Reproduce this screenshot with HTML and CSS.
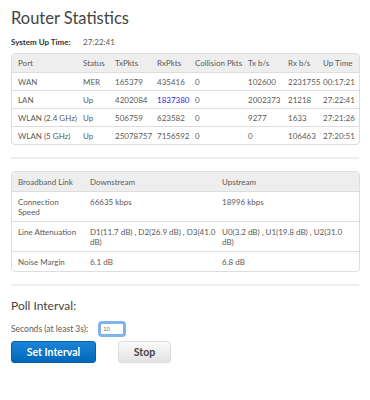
FILE: index.html
```html
<!DOCTYPE html>
<html lang="en">
<head>
    <meta charset="UTF-8">
    <meta name="viewport" content="width=device-width, initial-scale=1.0">
    <title>Router Statistics</title>
    <link rel="stylesheet" href="styles.css">
</head>
<body>
    <div class="page">
        <h1 class="title">Router Statistics</h1>
        <div class="uptime">
            <span class="label">System Up Time:</span>
            <span class="value">27:22:41</span>
        </div>

        <table class="grid ports">
            <colgroup>
                <col style="width:65px"><col style="width:32px"><col style="width:42px"><col style="width:38px">
                <col style="width:53px"><col style="width:40px"><col style="width:35px"><col style="width:42px">
            </colgroup>
            <tr class="head">
                <th>Port</th><th>Status</th><th>TxPkts</th><th>RxPkts</th>
                <th>Collision Pkts</th><th>Tx b/s</th><th>Rx b/s</th><th>Up Time</th>
            </tr>
            <tr>
                <td>WAN</td><td>MER</td><td>165379</td><td>435416</td>
                <td>0</td><td>102600</td><td>2231755</td><td>00:17:21</td>
            </tr>
            <tr>
                <td>LAN</td><td>Up</td><td>4202084</td><td class="hot">1837380</td>
                <td>0</td><td>2002373</td><td>21218</td><td>27:22:41</td>
            </tr>
            <tr>
                <td>WLAN (2.4 GHz)</td><td>Up</td><td>506759</td><td>623582</td>
                <td>0</td><td>9277</td><td>1633</td><td>27:21:26</td>
            </tr>
            <tr>
                <td>WLAN (5 GHz)</td><td>Up</td><td>25078757</td><td>7156592</td>
                <td>0</td><td>0</td><td>106463</td><td>27:20:51</td>
            </tr>
        </table>

        <hr class="rule">

        <table class="grid line">
            <colgroup>
                <col style="width:72px"><col style="width:132px"><col style="width:143px">
            </colgroup>
            <tr class="head">
                <th>Broadband Link</th><th>Downstream</th><th>Upstream</th>
            </tr>
            <tr>
                <td>Connection Speed</td><td>66635 kbps</td><td>18996 kbps</td>
            </tr>
            <tr>
                <td>Line Attenuation</td>
                <td>D1(11.7 dB) , D2(26.9 dB) , D3(41.0 dB)</td>
                <td>U0(3.2 dB) , U1(19.8 dB) , U2(31.0 dB)</td>
            </tr>
            <tr>
                <td>Noise Margin</td><td>6.1 dB</td><td>6.8 dB</td>
            </tr>
        </table>

        <hr class="rule">

        <h2 class="poll">Poll Interval:</h2>
        <div class="seconds">
            <label for="secs">Seconds (at least 3s):</label>
            <input id="secs" type="text" placeholder="10">
        </div>
        <div class="buttons">
            <button class="btn primary">Set Interval</button>
            <button class="btn plain">Stop</button>
        </div>
    </div>
</body>
</html>
```

FILE: styles.css
```css
body {
    margin: 0;
    padding: 0;
    font-family: Lato, "Open Sans", sans-serif;
    color: #5a5a5a;
    background: #fff;
}
.page {
    padding: 8px 11px 0 11px;
}
.title {
    font-size: 16.5px;
    font-weight: normal;
    color: #444;
    margin: 0 0 9px 0;
    line-height: 20px;
}
.uptime {
    font-size: 8px;
    display: flex;
    margin-bottom: 6px;
    line-height: 10px;
}
.uptime .label {
    font-weight: bold;
    color: #333;
    width: 72px;
}
.grid {
    border-collapse: separate;
    border-spacing: 0;
    table-layout: fixed;
    width: 347px;
    border: 1px solid #ddd;
    border-radius: 4px;
    font-size: 8px;
    color: #5a5a5a;
}
.grid th, .grid td {
    text-align: left;
    font-weight: normal;
    padding: 0 0 0 6px;
    white-space: nowrap;
    height: 17px;
    border-bottom: 1px solid #ddd;
    line-height: 10px;
}
.grid tr:last-child td {
    border-bottom: none;
}
.grid .head th {
    background: #eee;
    height: 18px;
}
.grid .head th:first-child {
    border-top-left-radius: 4px;
}
.grid .head th:last-child {
    border-top-right-radius: 4px;
}
.grid td.hot {
    color: #2a2ad8;
}
.line td {
    white-space: normal;
    vertical-align: top;
    padding-top: 5px;
    padding-bottom: 4px;
    height: auto;
}
.line td:first-child {
    padding-right: 5px;
}
.line td:last-child {
    padding-right: 12px;
}
.line .head th {
    height: 19px;
}
.rule {
    border: none;
    height: 2px;
    background: #eee;
    margin: 12px 0 12px 0;
}
.poll {
    font-size: 12px;
    font-weight: normal;
    color: #444;
    margin: 11px 0 7px 0;
    line-height: 16px;
}
.seconds {
    font-size: 8.5px;
    display: flex;
    align-items: center;
    gap: 10px;
}
.seconds input {
    width: 20px;
    height: 10px;
    border: 3px solid #7fb3ec;
    border-radius: 4px;
    font-size: 6px;
    padding: 0 0 0 2px;
    outline: none;
    color: #999;
}
.buttons {
    display: flex;
    gap: 22px;
    margin-top: 4px;
}
.btn {
    height: 22px;
    border-radius: 3px;
    font-family: Lato, sans-serif;
    font-weight: bold;
    font-size: 10.5px;
    cursor: pointer;
}
.primary {
    width: 85px;
    color: #fff;
    border: 1px solid #0a5fa8;
    background: linear-gradient(#1b84d6, #0068b9);
}
.plain {
    width: 53px;
    color: #444;
    border: 1px solid #ddd;
    background: linear-gradient(#fafafa, #e2e2e2);
}
```
